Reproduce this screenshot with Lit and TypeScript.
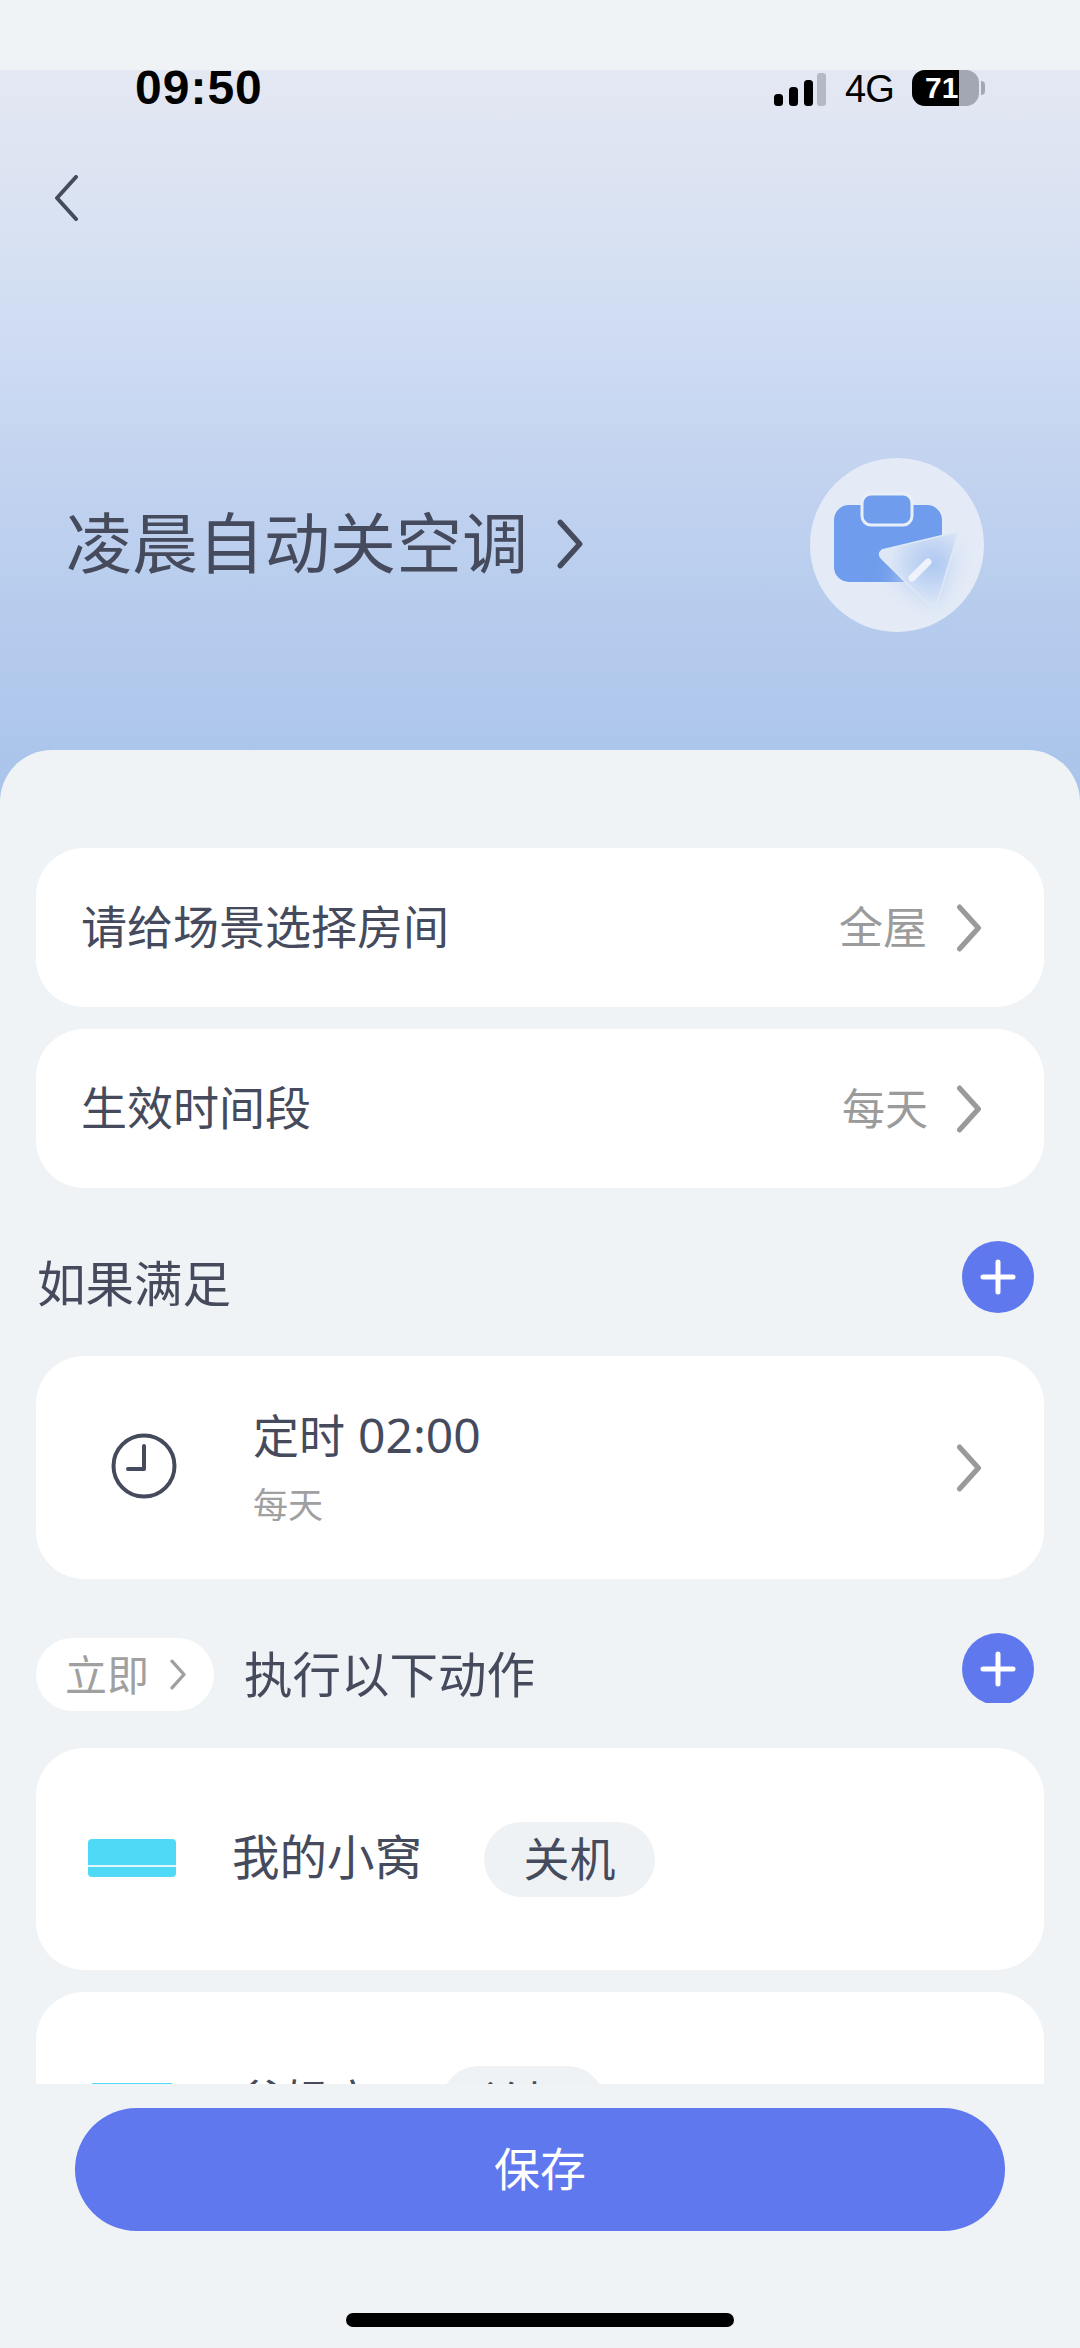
import { LitElement, html, css, svg } from 'lit';
import { customElement } from 'lit/decorators.js';

// chevron pointing right, used on rows and the title
const chevron = (cls: string) => html`<svg class=${cls} viewBox="0 0 24 46" fill="none" stroke="currentColor" stroke-linecap="round" stroke-linejoin="round"><path d="M3 3 L21 23 L3 43" /></svg>`;

const plus = html`<div class="plus-wrap"><svg class="plus" viewBox="0 0 72 72"><circle cx="36" cy="36" r="36" fill="#5f78ee" /><path d="M36 21 V51 M21 36 H51" stroke="#fff" stroke-width="5" stroke-linecap="round" /></svg></div>`;

const acIcon = svg`<rect x="0" y="0" width="88" height="38" rx="4" fill="#4fd9f6" /><rect x="0" y="26" width="88" height="2" fill="#dff7fd" />`;

@customElement('app-root')
export class AppRoot extends LitElement {
  static styles = css`
    :host {
      display: flex;
      flex-direction: column;
      width: 1080px;
      height: 2348px;
      overflow: hidden;
      background: #eff3f6;
      color: #454b5c;
      font-family: "Noto Sans CJK SC", "Liberation Sans", sans-serif;
    }
    * { box-sizing: border-box; }
    .topgap { height: 70px; flex: none; background: #f0f3f6; }
    .hero {
      flex: none;
      height: 732px;
      background: linear-gradient(180deg, #e4e8f3 0%, #d9e2f2 20%, #cfdcf3 36%, #bfd1ef 60%, #a8c3ea 100%);
    }
    .status {
      height: 36px;
      padding: 0 95px 0 135px;
      display: flex;
      align-items: center;
      justify-content: space-between;
      color: #000;
      font-family: "Liberation Sans", sans-serif;
    }
    .time { font-size: 48px; font-weight: 700; line-height: 36px; letter-spacing: 1px; }
    .status-right { display: flex; align-items: center; }
    .signal { width: 52px; height: 33px; display: block; margin-top: 2px; }
    .net { font-size: 38px; line-height: 36px; margin-left: 19px; width: 48px; letter-spacing: -1px; white-space: nowrap; margin-top: 2px; }
    .battery { width: 67px; height: 36px; margin-left: 19px; border-radius: 13px; overflow: hidden; background: #a3a6b3; }
    .battery-fill {
      width: 47px; height: 100%; background: #000;
      padding-left: 13px; white-space: nowrap;
      color: #fff; font-size: 30px; font-weight: 700; line-height: 36px;
    }
    .nub { width: 4px; height: 14px; margin-left: 2px; background: #a3a6b3; border-radius: 0 5px 5px 0; }
    .back { display: block; width: 24px; height: 46px; margin: 69px 0 0 54px; color: #454b5c; }
    .title-row {
      display: flex;
      align-items: center;
      justify-content: space-between;
      margin-top: 237px;
      padding: 0 96px 0 66px;
    }
    .title { display: flex; align-items: center; font-size: 66px; line-height: 88px; }
    .title-text { margin-bottom: 12px; }
    .title-chev { width: 26px; height: 50px; margin-left: 29px; margin-top: -2px; stroke-width: 5; display: block; }
    .scene { display: block; width: 174px; height: 174px; }
    .sheet {
      flex: none;
      height: 1598px;
      margin-top: -52px;
      padding-top: 98px;
      background: #eff3f6;
      border-radius: 52px 52px 0 0;
      position: relative;
      overflow: hidden;
    }
    .card { background: #fff; margin: 0 36px; border-radius: 48px; }
    .row {
      height: 159px;
      display: flex;
      align-items: center;
      padding: 0 62px 0 45px;
      font-size: 46px;
      margin-bottom: 22px;
    }
    .row .label { flex: 1; margin-bottom: 8px; }
    .value { font-size: 44px; color: #9b9b9b; margin-right: 29px; margin-bottom: 5px; }
    .value.narrow { font-size: 43px; margin-right: 28px; }
    .chev { display: block; width: 26px; height: 48px; color: #9a9a9a; stroke-width: 5; flex: none; }
    .section {
      display: flex;
      align-items: center;
      justify-content: space-between;
      padding: 0 46px 0 37px;
      font-size: 48.5px;
    }
    .section.first { height: 72px; margin-top: 53px; margin-bottom: 43px; }
    .section.first > span { margin-top: 8px; }
    .plus-wrap { width: 72px; height: 72px; overflow: hidden; flex: none; }
    .plus { display: block; width: 72px; height: 72px; }
    .trigger {
      height: 223px;
      display: flex;
      align-items: center;
      padding: 0 62px 0 75px;
    }
    .clock { display: block; width: 66px; height: 66px; flex: none; margin-top: -4px; }
    .trigger-text { flex: 1; margin-left: 76px; margin-top: -2px; }
    .trigger-main { font-size: 46px; line-height: 58px; margin-top: -3px; }
    .trigger-main .num { font-family: "Noto Sans", "Liberation Sans", sans-serif; margin-left: 13px; font-size: 48px; }
    .trigger-sub { font-size: 35px; line-height: 48px; margin-top: 15px; color: #a0a0a0; }
    .section.second { height: 73px; margin-top: 59px; margin-bottom: 37px; padding-left: 36px; }
    .section.second .plus-wrap { height: 70px; margin-top: -13px; }
    .section-left { display: flex; align-items: center; }
    .section-left > span { margin-bottom: 6px; }
    .now {
      display: flex; align-items: center;
      width: 178px; height: 73px;
      padding-left: 29px;
      background: #fff;
      border-radius: 37px;
      font-size: 42px;
      color: #a0a0a0;
      margin-right: 30px;
    }
    .now-text { margin-bottom: 4px; }
    .now-chev { width: 16px; height: 31px; margin-left: 21px; stroke-width: 5; display: block; }
    .action {
      height: 222px;
      display: flex;
      align-items: center;
      padding-left: 52px;
      margin-bottom: 22px;
      font-size: 47.5px;
    }
    .action-icon { display: block; width: 88px; height: 38px; flex: none; margin-top: -3px; }
    .action-name { margin-left: 56px; margin-bottom: 10px; }
    .tag {
      height: 75px;
      display: flex; align-items: center; justify-content: center;
      padding: 0 0 6px;
      width: 171px;
      margin-left: 62px;
      background: #eff2f5;
      border-radius: 38px;
      font-size: 46px;
    }
    .action.next { font-size: 45px; }
    .action.next .action-icon { width: 84px; margin-left: 2px; margin-right: 2px; }
    .action.next .action-name { margin-left: 64px; }
    .action.next .tag { margin-left: 66px; width: 164px; font-size: 45px; }
    /* bottom bar covers the list, that is why the second action is cut */
    .footer {
      position: absolute;
      left: 0;
      right: 0;
      top: 1334px;
      height: 264px;
      background: #eff3f6;
      padding: 24px 75px 0;
    }
    .save {
      height: 123px;
      background: #5f78ee;
      border-radius: 62px;
      color: #fff;
      font-size: 46px;
      padding-bottom: 8px;
      display: flex;
      align-items: center;
      justify-content: center;
    }
    .home { width: 388px; height: 14px; margin: 82px auto 0; background: #000; border-radius: 7px; }
  `;

  render() {
    return html`
      <div class="topgap"></div>
      <div class="hero">
        <div class="status">
          <span class="time">09:50</span>
          <div class="status-right">
            <svg class="signal" viewBox="0 0 52 33">
              <rect x="0" y="21" width="9" height="12" rx="3.5" fill="#000" />
              <rect x="15" y="14" width="9" height="19" rx="3.5" fill="#000" />
              <rect x="30" y="7" width="9" height="26" rx="3.5" fill="#000" />
              <rect x="43" y="0" width="9" height="33" rx="3" fill="#b4b9c6" />
            </svg>
            <span class="net">4G</span>
            <div class="battery">
              <div class="battery-fill">71</div>
            </div>
            <div class="nub"></div>
          </div>
        </div>
        <svg class="back" viewBox="0 0 24 46" fill="none" stroke="currentColor" stroke-width="4" stroke-linecap="round" stroke-linejoin="round"><path d="M22 2 L3 23 L22 44" /></svg>
        <div class="title-row">
          <div class="title"><span class="title-text">凌晨自动关空调</span>${chevron('title-chev')}</div>
          <svg class="scene" viewBox="0 0 174 174">
            <defs>
              <radialGradient id="glass" cx="0.68" cy="0.42" r="0.55">
                <stop offset="0" stop-color="#aec8f1" />
                <stop offset="0.55" stop-color="#c6d8f4" />
                <stop offset="1" stop-color="#dde7f6" />
              </radialGradient>
              <filter id="soft" x="-40%" y="-40%" width="180%" height="180%"><feGaussianBlur stdDeviation="10" /></filter>
            </defs>
            <circle cx="87" cy="87" r="87" fill="#e4ebf6" />
            <rect x="24" y="47" width="108" height="77" rx="15" fill="#6f9cec" />
            <path d="M80 118 L150 90 L126 150 Z" fill="#c3d5f3" filter="url(#soft)" />
            <rect x="52" y="36" width="50" height="31" rx="9" fill="#6f9cec" stroke="#e8eff9" stroke-width="3" />
            <path d="M72 92 Q67 96 72 101 L119 147 Q124 152 127 146 L147 79 Q149 73 143 75 Z" fill="url(#glass)" stroke="#dfe8f6" stroke-width="1.5" />
            <path d="M102 120 L118 104" stroke="#eef3fb" stroke-width="7" stroke-linecap="round" />
          </svg>
        </div>
      </div>
      <div class="sheet">
        <div class="card row"><span class="label">请给场景选择房间</span><span class="value">全屋</span>${chevron('chev')}</div>
        <div class="card row"><span class="label">生效时间段</span><span class="value narrow">每天</span>${chevron('chev')}</div>
        <div class="section first"><span>如果满足</span>${plus}</div>
        <div class="card trigger">
          <svg class="clock" viewBox="0 0 66 66" fill="none" stroke="#454b5c" stroke-width="4" stroke-linecap="round" stroke-linejoin="round"><circle cx="33" cy="33" r="30.5" /><path d="M33 13 V36 H17" /></svg>
          <div class="trigger-text">
            <div class="trigger-main">定时<span class="num">02:00</span></div>
            <div class="trigger-sub">每天</div>
          </div>
          ${chevron('chev')}
        </div>
        <div class="section second">
          <div class="section-left">
            <div class="now"><span class="now-text">立即</span>${chevron('now-chev')}</div>
            <span>执行以下动作</span>
          </div>
          ${plus}
        </div>
        <div class="card action">
          <svg class="action-icon" viewBox="0 0 88 38" preserveAspectRatio="none">${acIcon}</svg>
          <span class="action-name">我的小窝</span>
          <span class="tag">关机</span>
        </div>
        <div class="card action next">
          <svg class="action-icon" viewBox="0 0 88 38" preserveAspectRatio="none">${acIcon}</svg>
          <span class="action-name">爸妈房</span>
          <span class="tag">关机</span>
        </div>
        <div class="footer">
          <div class="save">保存</div>
          <div class="home"></div>
        </div>
      </div>
    `;
  }
}
